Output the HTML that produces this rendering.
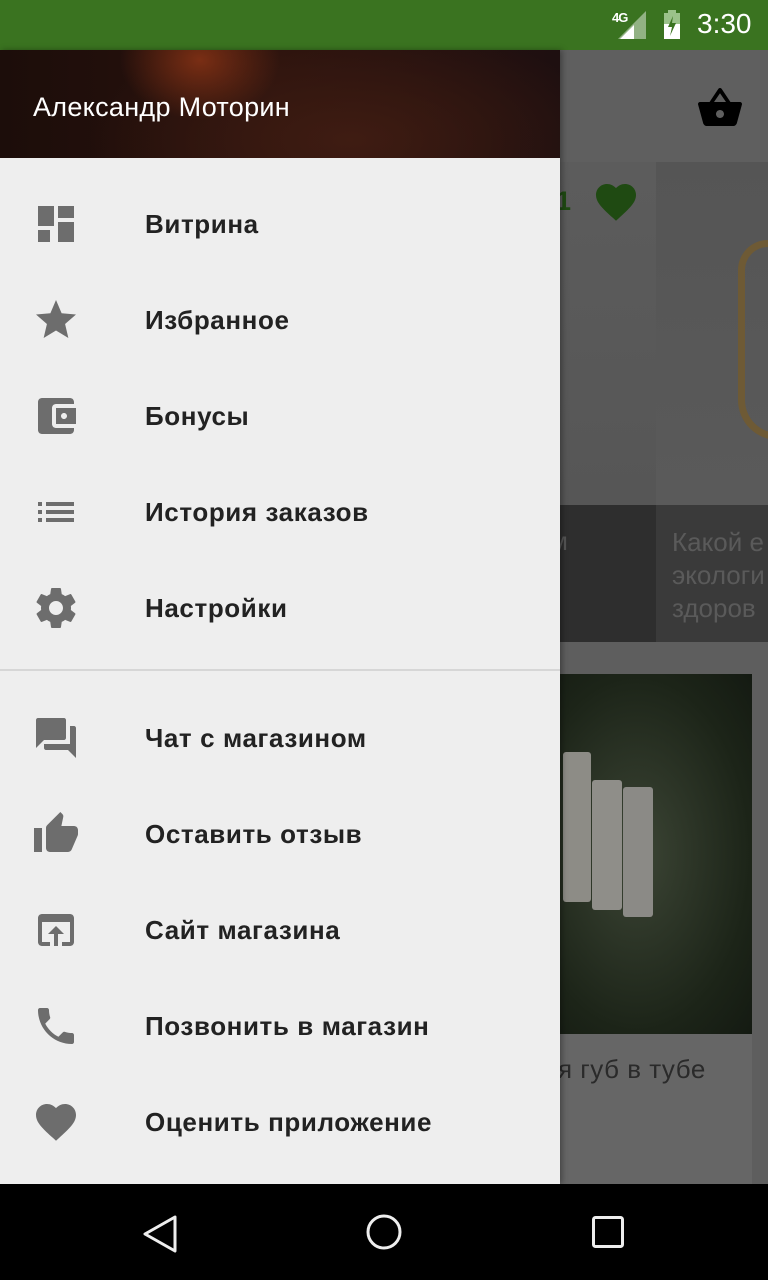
<!DOCTYPE html>
<html><head><meta charset="utf-8"><style>
*{margin:0;padding:0;box-sizing:border-box}
body{width:768px;height:1280px;overflow:hidden;position:relative;background:#5e5e5e;font-family:"Liberation Sans","DejaVu Sans",sans-serif}
.abs{position:absolute}
.item{position:absolute;left:0;width:560px;height:96px}
.item svg{position:absolute;left:32px;top:24px;width:48px;height:48px;fill:#6d6d6d}
.item span{position:absolute;left:145px;top:0;line-height:96px;font-size:26px;letter-spacing:0.6px;font-weight:bold;color:#222;white-space:nowrap}
</style></head><body>
<div class="abs" style="left:0;top:0;width:768px;height:50px;background:#3a7320"></div>
<div class="abs" style="left:612px;top:10px;color:#fff;font-size:13px;font-weight:bold;letter-spacing:-1px">4G</div>
<svg class="abs" style="left:618px;top:10px" width="30" height="30"><polygon points="28,1 28,29 0,29" fill="#fff" opacity=".45"/><polygon points="16,15 16,29 2,29" fill="#fff"/></svg>
<svg class="abs" style="left:663px;top:10px" width="22" height="30"><rect x="5" y="0" width="8" height="3" fill="#9bc28a"/><rect x="1" y="3" width="16" height="26" fill="#9bc28a"/><rect x="1" y="14" width="16" height="15" fill="#fff"/><polygon points="10,6 5,17 9,17 7,26 13,13 9,13" fill="#3a7320"/></svg>
<div class="abs" style="left:697px;top:8px;color:#fff;font-size:28px">3:30</div>

<div class="abs" style="left:560px;top:50px;width:208px;height:112px;background:#5f5f5f"></div>
<svg class="abs" style="left:696px;top:84px" width="48" height="48" viewBox="0 0 24 24"><path d="M17.21 9l-4.38-6.56c-.19-.28-.51-.42-.83-.42-.32 0-.64.14-.83.43L6.79 9H2c-.55 0-1 .45-1 1 0 .09.01.18.04.27l2.54 9.27c.23.84 1 1.46 1.920 1.46h13c.92 0 1.69-.62 1.93-1.46l2.54-9.27L23 10c0-.55-.45-1-1-1h-4.79zM9 9l3-4.4L15 9H9zm3 8c-1.1 0-2-.9-2-2s.9-2 2-2 2 .9 2 2-.9 2-2 2z" fill="#000"/></svg>
<div class="abs" style="left:560px;top:162px;width:96px;height:343px;background:linear-gradient(#5c5c5c,#565656)"></div>
<div class="abs" style="left:556px;top:186px;font-size:27px;font-weight:bold;color:#1f4a12">1</div>
<svg class="abs" style="left:592px;top:178px" width="48" height="48" viewBox="0 0 24 24"><path fill="#1f4a12" d="M12 21.35l-1.45-1.32C5.4 15.36 2 12.28 2 8.5 2 5.42 4.42 3 7.5 3c1.74 0 3.41.81 4.5 2.09C13.09 3.81 14.76 3 16.5 3 19.58 3 22 5.42 22 8.5c0 3.78-3.4 6.86-8.55 11.54L12 21.35z"/></svg>
<div class="abs" style="left:656px;top:162px;width:112px;height:343px;background:linear-gradient(#555,#5a5a5a)"></div>
<div class="abs" style="left:738px;top:240px;width:40px;height:200px;border:7px solid #6e5a35;border-radius:30px 0 0 40px;border-right:none"></div>
<div class="abs" style="left:560px;top:505px;width:96px;height:137px;background:#2e2e2e"></div>
<div class="abs" style="left:656px;top:505px;width:112px;height:137px;background:#3a3a3a"></div>
<div class="abs" style="left:550px;top:526px;font-size:26px;color:#555">м</div>
<div class="abs" style="left:672px;top:526px;font-size:26px;line-height:33px;color:#5a5a5a;white-space:nowrap">Какой е<br>экологи<br>здоров</div>
<div class="abs" style="left:560px;top:674px;width:192px;height:510px;background:#666"></div>
<div class="abs" style="left:560px;top:674px;width:192px;height:360px;background:radial-gradient(ellipse at 40% 50%,#3c4535,#1c2418 70%,#141a12)"></div>
<div class="abs" style="left:563px;top:752px;width:28px;height:150px;background:#8d8c86;border-radius:3px"></div>
<div class="abs" style="left:592px;top:780px;width:30px;height:130px;background:#8f8e89;border-radius:3px"></div>
<div class="abs" style="left:623px;top:787px;width:30px;height:130px;background:#8b8a86;border-radius:3px"></div>
<div class="abs" style="left:558px;top:1054px;font-size:26px;color:#2a2a2a;letter-spacing:0.5px">я губ в тубе</div>

<div class="abs" style="left:0;top:50px;width:560px;height:1134px;background:#eeeeee;box-shadow:2px 0 6px rgba(0,0,0,.35)"></div>
<div class="abs" style="left:0;top:50px;width:560px;height:108px;background:radial-gradient(ellipse 80px 60px at 200px 10px,#7a2e14,transparent),radial-gradient(ellipse 260px 120px at 350px 90px,#3f1c12,transparent),linear-gradient(90deg,#1c0d0a,#2a120d 50%,#1e0f10)"></div>
<div class="abs" style="left:33px;top:92px;color:#fff;font-size:27px;letter-spacing:0.3px;white-space:nowrap">Александр Моторин</div>

<div class="item" style="top:176px"><svg viewBox="0 0 24 24"><path d="M3 13h8V3H3v10zm0 8h6v-6H3v6zm10 0h8V11h-8v10zm0-18v6h8V3h-8z"/></svg><span>Витрина</span></div>
<div class="item" style="top:272px"><svg viewBox="0 0 24 24"><path d="M12 17.27L18.18 21l-1.64-7.03L22 9.24l-7.19-.61L12 2 9.19 8.63 2 9.24l5.46 4.73L5.82 21z"/></svg><span>Избранное</span></div>
<div class="item" style="top:368px"><svg viewBox="0 0 24 24"><path d="M21 18v1c0 1.1-.9 2-2 2H5c-1.11 0-2-.9-2-2V5c0-1.1.89-2 2-2h14c1.1 0 2 .9 2 2v1h-9c-1.11 0-2 .9-2 2v8c0 1.1.89 2 2 2h9zm-9-2h10V8H12v8zm4-2.5c-.83 0-1.5-.67-1.5-1.5s.67-1.5 1.5-1.5 1.5.67 1.5 1.5-.67 1.5-1.5 1.5z"/></svg><span>Бонусы</span></div>
<div class="item" style="top:464px"><svg viewBox="0 0 24 24"><path d="M3 13h2v-2H3v2zm0 4h2v-2H3v2zm0-8h2V7H3v2zm4 4h14v-2H7v2zm0 4h14v-2H7v2zM7 7v2h14V7H7z"/></svg><span>История заказов</span></div>
<div class="item" style="top:560px"><svg viewBox="0 0 24 24"><path d="M19.43 12.98c.04-.32.07-.64.07-.98s-.03-.66-.07-.98l2.11-1.65c.19-.15.24-.42.12-.64l-2-3.46c-.12-.22-.39-.3-.61-.22l-2.49 1c-.52-.4-1.08-.73-1.69-.98l-.38-2.65C14.46 2.18 14.25 2 14 2h-4c-.25 0-.46.18-.49.42l-.38 2.65c-.61.25-1.17.59-1.69.98l-2.49-1c-.23-.09-.49 0-.61.22l-2 3.46c-.13.22-.07.49.12.64l2.11 1.65c-.04.32-.07.65-.07.98s.03.66.07.98l-2.11 1.65c-.19.15-.24.42-.12.64l2 3.46c.12.22.39.3.61.22l2.49-1c.52.4 1.08.73 1.69.98l.38 2.65c.03.24.24.42.49.42h4c.25 0 .46-.18.49-.42l.38-2.65c.61-.25 1.17-.59 1.69-.98l2.49 1c.23.09.49 0 .61-.22l2-3.46c.12-.22.07-.49-.12-.64l-2.11-1.65zM12 15.5c-1.93 0-3.5-1.57-3.5-3.5s1.57-3.5 3.5-3.5 3.5 1.57 3.5 3.5-1.57 3.5-3.5 3.5z"/></svg><span>Настройки</span></div>
<div class="abs" style="left:0;top:669px;width:560px;height:2px;background:#d6d6d6"></div>
<div class="item" style="top:690px"><svg viewBox="0 0 24 24"><path d="M21 6h-2v9H6v2c0 .55.45 1 1 1h11l4 4V7c0-.55-.45-1-1-1zm-4 6V3c0-.55-.45-1-1-1H3c-.55 0-1 .45-1 1v14l4-4h10c.55 0 1-.45 1-1z"/></svg><span>Чат с магазином</span></div>
<div class="item" style="top:786px"><svg viewBox="0 0 24 24"><path d="M1 21h4V9H1v12zm22-11c0-1.1-.9-2-2-2h-6.31l.95-4.57.03-.32c0-.41-.17-.79-.44-1.06L14.17 1 7.59 7.59C7.22 7.95 7 8.45 7 9v10c0 1.1.9 2 2 2h9c.83 0 1.54-.5 1.84-1.22l3.02-7.05c.09-.23.14-.47.14-.73v-1.91l-.01-.01L23 10z"/></svg><span>Оставить отзыв</span></div>
<div class="item" style="top:882px"><svg viewBox="0 0 24 24"><path d="M19 4H5c-1.11 0-2 .9-2 2v12c0 1.1.89 2 2 2h4v-2H5V8h14v10h-4v2h4c1.1 0 2-.9 2-2V6c0-1.1-.89-2-2-2zm-7 6l-4 4h3v6h2v-6h3l-4-4z"/></svg><span>Сайт магазина</span></div>
<div class="item" style="top:978px"><svg viewBox="0 0 24 24"><path d="M6.62 10.79c1.44 2.83 3.76 5.14 6.59 6.59l2.2-2.2c.27-.27.67-.36 1.02-.24 1.12.37 2.33.57 3.57.57.55 0 1 .45 1 1V20c0 .55-.45 1-1 1-9.39 0-17-7.61-17-17 0-.55.45-1 1-1h3.5c.55 0 1 .45 1 1 0 1.25.2 2.45.57 3.57.11.35.03.74-.25 1.02l-2.2 2.2z"/></svg><span>Позвонить в магазин</span></div>
<div class="item" style="top:1074px"><svg viewBox="0 0 24 24"><path d="M12 21.35l-1.45-1.32C5.4 15.36 2 12.28 2 8.5 2 5.42 4.42 3 7.5 3c1.74 0 3.41.81 4.5 2.09C13.09 3.81 14.76 3 16.5 3 19.58 3 22 5.42 22 8.5c0 3.78-3.4 6.86-8.55 11.54L12 21.35z"/></svg><span>Оценить приложение</span></div>

<div class="abs" style="left:0;top:1184px;width:768px;height:96px;background:#000"></div>
<svg class="abs" style="left:0;top:1184px" width="768" height="96"><polygon points="175,33 145,50 175,67" fill="none" stroke="#eee" stroke-width="3" stroke-linejoin="round"/><circle cx="384" cy="48" r="16" fill="none" stroke="#eee" stroke-width="3"/><rect x="593.5" y="33.5" width="29" height="29" rx="2" fill="none" stroke="#eee" stroke-width="3"/></svg>
</body></html>
